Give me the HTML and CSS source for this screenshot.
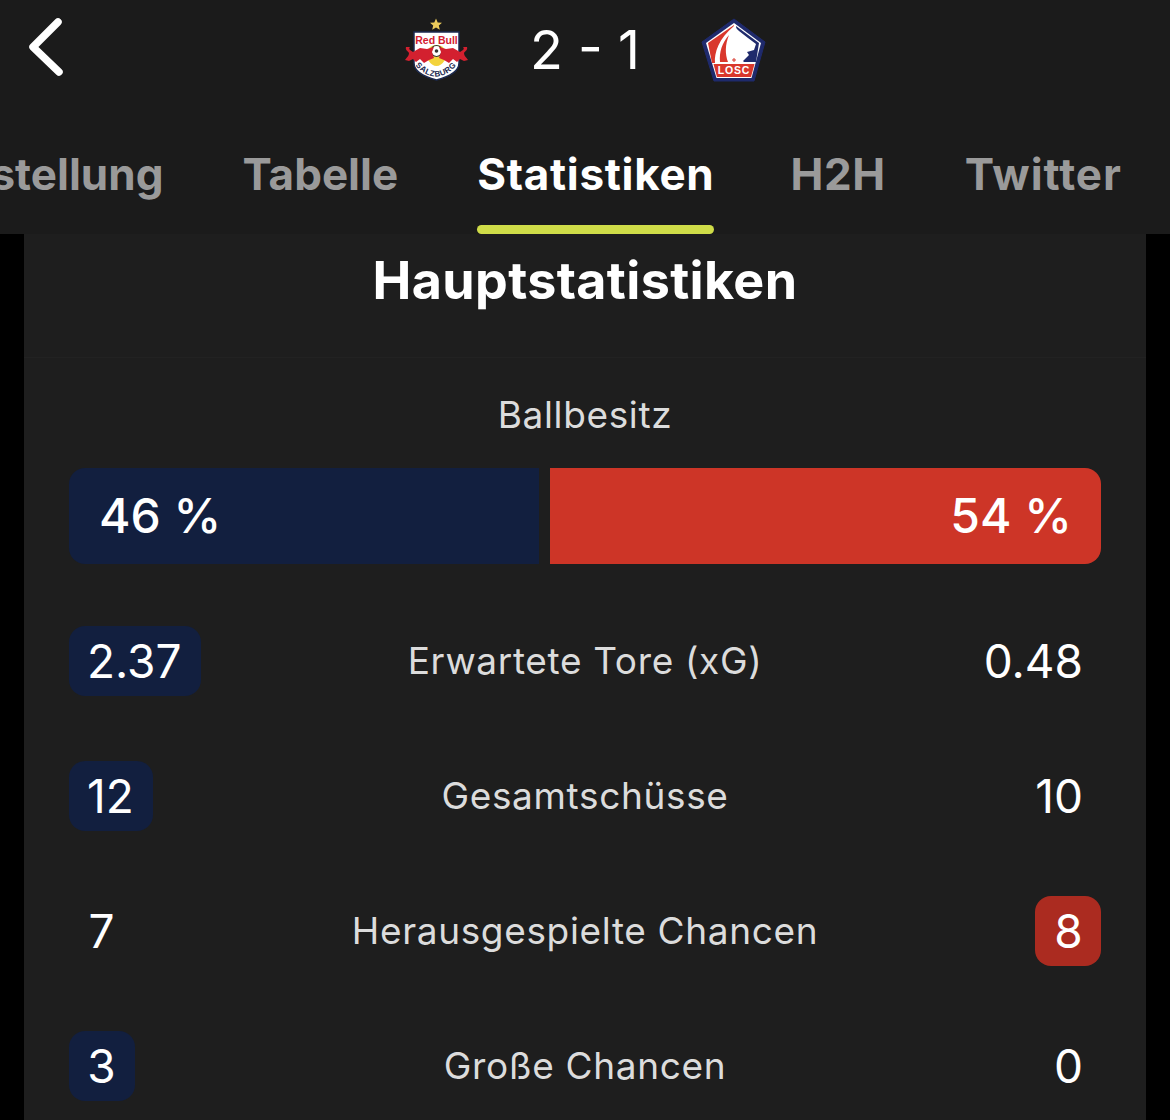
FILE: index.html
```html
<!DOCTYPE html>
<html lang="de">
<head>
<meta charset="utf-8">
<title>Statistiken</title>
<link rel="stylesheet" href="styles.css">
</head>
<body>
<header class="header">
  <div class="topbar">
    <svg class="back" width="36" height="60" viewBox="0 0 36 60"><path d="M30 5 L5 30 L31 55" fill="none" stroke="#fff" stroke-width="7.500" stroke-linecap="round" stroke-linejoin="round"/></svg>
    <div class="score">
      <svg class="crest" width="66" height="68" viewBox="0 0 66 68">
        <defs>
          <path id="bull" d="M3 31C2 34 5 35 6 37C6 40 4 41 2 44L6 45L10 43L13 46L17 43L21 47L26 44L31 42L29 36L31 31L24 33L17 32L10 36L7 34C6 33 6 32 7 31Z" fill="#d3202f"/>
          <path id="sb-curve" d="M12 49Q33 72 54 49"/>
        </defs>
        <path d="M33 2.500l1.700 3.900 4.300.400-3.200 2.800 1 4.100-3.800-2.200-3.800 2.200 1-4.100L27 6.800l4.300-.400z" fill="#eccb5a"/>
        <path d="M11 16H56V47Q56 58 33.500 64Q11 58 11 47Z" fill="#fff" stroke="#1c2a50" stroke-width="1.500"/>
        <text x="33.500" y="28" class="crest-rb" text-anchor="middle">Red Bull</text>
        <path d="M24 36A10 10 0 0 1 43 36L42 44Q38 50 33.500 50Q29 50 25 44Z" fill="#f3d33c"/>
        <circle cx="33.500" cy="35" r="5.500" fill="#fff" stroke="#333" stroke-width="1.200"/>
        <circle cx="33.500" cy="35" r="1.800" fill="#333"/>
        <use href="#bull"/>
        <use href="#bull" transform="translate(67 0) scale(-1 1)"/>
        <text class="crest-sb"><textPath href="#sb-curve" startOffset="50%" text-anchor="middle">SALZBURG</textPath></text>
      </svg>
      <div class="result">2 - 1</div>
      <svg class="crest" width="66" height="64" viewBox="0 0 66 64">
        <path d="M33 1L64 24 53 63H13L1 24Z" fill="#1f2a6c" stroke="#1f2a6c" stroke-linejoin="round"/>
        <path d="M33 5L60 25 50.500 60H15.500L5 25Z" fill="#fff"/>
        <path d="M33 7L7 25 11 45H30Z" fill="#d9372c"/>
        <path d="M35 8L58 25 55 44H40Z" fill="#1f2a6c"/>
        <path d="M33 8L38 13 47 20 55 26 53 32 46 34 48 37 42 43 44 45H14C13 35 18 20 33 8Z" fill="#fff"/>
        <path d="M19 44C18 34 21 25 28 17C24 27 24 36 27 44Z" fill="#d9372c"/>
        <path d="M32.500 40h1v1.500h1.500v1h-1.500V44h-1v-1.500H31v-1h1.500z" fill="#d9372c"/>
        <path d="M12.500 46H53.500L50 59H16Z" fill="#d9372c"/>
        <text x="33" y="56" class="crest-losc" text-anchor="middle">LOSC</text>
      </svg>
    </div>
  </div>
  <nav class="tabs">
    <span class="tab">Aufstellung</span>
    <span class="tab">Tabelle</span>
    <span class="tab tab-active">Statistiken</span>
    <span class="tab tab-h2h">H2H</span>
    <span class="tab tab-twitter">Twitter</span>
  </nav>
</header>
<main class="card">
  <h1 class="title">Hauptstatistiken</h1>
  <section class="stats">
    <div class="poss-label">Ballbesitz</div>
    <div class="poss">
      <div class="poss-home">46 %</div>
      <div class="poss-away">54 %</div>
    </div>
    <div class="row">
      <div class="val"><span class="pill pill-home">2.37</span></div>
      <div class="label">Erwartete Tore (xG)</div>
      <div class="val val-away"><span class="pill">0.48</span></div>
    </div>
    <div class="row">
      <div class="val"><span class="pill pill-home">12</span></div>
      <div class="label">Gesamtschüsse</div>
      <div class="val val-away"><span class="pill">10</span></div>
    </div>
    <div class="row">
      <div class="val"><span class="pill">7</span></div>
      <div class="label">Herausgespielte Chancen</div>
      <div class="val val-away"><span class="pill pill-away">8</span></div>
    </div>
    <div class="row">
      <div class="val"><span class="pill pill-home">3</span></div>
      <div class="label">Große Chancen</div>
      <div class="val val-away"><span class="pill">0</span></div>
    </div>
  </section>
</main>
</body>
</html>
```
FILE: styles.css
```css
* { box-sizing: border-box; }
html, body { margin: 0; height: 100%; }
body {
  background: #000;
  color: #fff;
  font-family: Inter, "Liberation Sans", sans-serif;
  width: 1170px;
  height: 1120px;
  overflow: hidden;
}
.header {
  background: #1b1b1b;
  height: 234px;
  overflow: hidden;
}
.topbar {
  position: relative;
  height: 118px;
  padding-top: 17px;
}
.back {
  position: absolute;
  left: 28px;
  top: 17px;
}
.score {
  display: flex;
  justify-content: center;
  align-items: center;
  height: 66px;
}
.crest { flex: none; display: block; }
.result {
  width: 232px;
  text-align: center;
  font-size: 54px;
  font-weight: 400;
  line-height: 66px;
}
.tabs {
  display: flex;
  justify-content: flex-end;
  gap: 79px;
  padding-right: 48px;
  height: 116px;
}
.tab {
  flex: none;
  position: relative;
  height: 116px;
  padding-top: 29px;
  font-size: 44px;
  line-height: 54px;
  font-weight: 700;
  color: #9a9a9a;
}
.tab-active { color: #fff; letter-spacing: .7px; margin-right: -3px; }
.tab-h2h { letter-spacing: .6px; }
.tab-twitter { letter-spacing: 1px; }
.tab-active::after {
  content: "";
  position: absolute;
  left: 0;
  right: 0;
  bottom: 0;
  height: 9px;
  background: #cfdc48;
  border-radius: 5px;
}
.card {
  margin: 0 24px;
  height: 886px;
  background: #1e1e1e;
  overflow: hidden;
}
.title {
  margin: 0;
  height: 124px;
  padding-top: 17px;
  text-align: center;
  font-size: 52px;
  line-height: 60px;
  font-weight: 700;
  letter-spacing: .35px;
  border-bottom: 1px solid #222;
}
.stats { padding: 0 45px; }
.poss-label {
  margin-top: 35px;
  text-align: center;
  font-size: 37px;
  letter-spacing: .65px;
  line-height: 44px;
  color: #dcdcdc;
}
.poss {
  display: flex;
  gap: 11px;
  margin-top: 31px;
  height: 96px;
  font-size: 48px;
  font-weight: 500;
  line-height: 96px;
}
.poss-home {
  width: 470px;
  background: #121f3f;
  border-radius: 16px 0 0 16px;
  padding-left: 30px;
}
.poss-away {
  flex: 1;
  background: #cd3527;
  border-radius: 0 16px 16px 0;
  padding-right: 29px;
  text-align: right;
}
.row {
  display: grid;
  grid-template-columns: 260px 1fr 260px;
  align-items: center;
  height: 70px;
  margin-top: 65px;
}
.poss + .row { margin-top: 62px; }
.val { display: flex; }
.val-away { justify-content: flex-end; }
.pill {
  height: 70px;
  min-width: 66px;
  padding: 0 19px 0 18px;
  border-radius: 16px;
  font-size: 46px;
  line-height: 70px;
  text-align: center;
}
.val-away .pill { padding: 0 18px 0 19px; }
.pill-home { background: #121f3f; }
.pill-away { background: #ab2b20; }
.label {
  text-align: center;
  font-size: 37px;
  letter-spacing: .65px;
  padding-bottom: 2px;
  color: #dcdcdc;
}
.crest-rb { font: 700 10.500px "Liberation Sans", sans-serif; fill: #d3202f; }
.crest-sb { font: 700 8px "Liberation Sans", sans-serif; fill: #1c2a50; letter-spacing: .5px; }
.crest-losc { font: 700 10.500px "Liberation Sans", sans-serif; fill: #fff; letter-spacing: .8px; }
```
